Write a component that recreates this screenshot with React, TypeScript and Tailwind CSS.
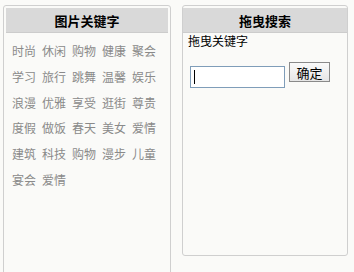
import React from "react";

const tags = [
  "时尚", "休闲", "购物", "健康", "聚会",
  "学习", "旅行", "跳舞", "温馨", "娱乐",
  "浪漫", "优雅", "享受", "逛街", "尊贵",
  "度假", "做饭", "春天", "美女", "爱情",
  "建筑", "科技", "购物", "漫步", "儿童",
  "宴会", "爱情",
];

const font = { fontFamily: '"Noto Sans CJK SC", "Noto Sans", sans-serif' };

export default function App() {
  return (
    <div
      className="w-[354px] h-[272px] overflow-hidden bg-[#fafaf8] flex items-start pt-[5px] pl-[3px] gap-[11px]"
      style={font}
    >
      {/* Left panel */}
      <div className="w-[168px] h-[290px] border border-[#cfcfcf] rounded-[3px] bg-[#fafaf8] px-[2px] pt-[2px] flex flex-col">
        <div className="h-[25px] bg-[#d9d9d9] border-b border-[#cccccc] flex items-center justify-center text-[13px] font-bold text-black leading-none">
          图片关键字
        </div>
        <div className="mt-[5px] pl-[6px] pr-[2px] flex flex-wrap gap-x-[6px] text-[12px] leading-[25.8px] text-[#8a8a8a]">
          {tags.map((t, i) => (
            <span key={i} className="w-[24px] whitespace-nowrap">
              {t}
            </span>
          ))}
        </div>
      </div>

      {/* Right panel */}
      <div className="w-[166px] h-[251px] border border-[#cfcfcf] rounded-[3px] bg-[#fafaf8] pt-[2px] flex flex-col">
        <div className="h-[25px] bg-[#d9d9d9] border-b border-[#cccccc] flex items-center justify-center text-[13px] font-bold text-black leading-none">
          拖曳搜索
        </div>
        <div className="pl-[5px] text-[12px] leading-[14px] text-black mt-[1px]">拖曳关键字</div>
        <div className="mt-[14px] ml-[7px] flex items-start gap-[4px]">
          <div className="mt-[4px] w-[95px] h-[22px] border border-[#7f9db9] bg-white pl-[3px] pt-[3px]">
            <div className="w-[1px] h-[14px] bg-black" />
          </div>
          <div className="w-[41px] h-[20px] border border-[#8a8a8a] bg-gradient-to-b from-[#fafafa] to-[#e6e6e6] flex items-center justify-center text-[13px] leading-none text-black">
            确定
          </div>
        </div>
      </div>
    </div>
  );
}
